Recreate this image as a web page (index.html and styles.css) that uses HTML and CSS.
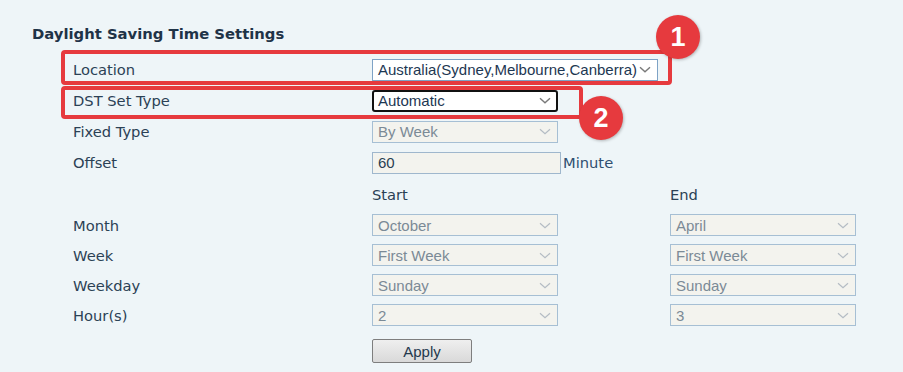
FILE: index.html
```html
<!DOCTYPE html>
<html>
<head>
<meta charset="utf-8">
<link rel="stylesheet" href="styles.css">
</head>
<body>
<div class="page">
  <h1 class="title">Daylight Saving Time Settings</h1>
  <div class="form">
    <div class="row r31">
      <div class="label">Location</div>
      <div class="sel enabled wide"><span>Australia(Sydney,Melbourne,Canberra)</span><svg class="chev" viewBox="0 0 12 7" width="12" height="7"><path d="M1 1.2 L6 5.8 L11 1.2" fill="none" stroke="currentColor" stroke-width="1.4"/></svg></div>
    </div>
    <div class="row r31">
      <div class="label">DST Set Type</div>
      <div class="sel enabled focus"><span>Automatic</span><svg class="chev" viewBox="0 0 12 7" width="12" height="7"><path d="M1 1.2 L6 5.8 L11 1.2" fill="none" stroke="currentColor" stroke-width="1.4"/></svg></div>
    </div>
    <div class="row r31">
      <div class="label">Fixed Type</div>
      <div class="sel dis"><span>By Week</span><svg class="chev" viewBox="0 0 12 7" width="12" height="7"><path d="M1 1.2 L6 5.8 L11 1.2" fill="none" stroke="currentColor" stroke-width="1.2"/></svg></div>
    </div>
    <div class="row r31">
      <div class="label">Offset</div>
      <div class="offset"><div class="input">60</div><span class="unit">Minute</span></div>
    </div>
    <div class="row r32">
      <div class="label"></div>
      <div class="label">Start</div>
      <div class="label">End</div>
    </div>
    <div class="row r30">
      <div class="label">Month</div>
      <div class="sel dis"><span>October</span><svg class="chev" viewBox="0 0 12 7" width="12" height="7"><path d="M1 1.2 L6 5.8 L11 1.2" fill="none" stroke="currentColor" stroke-width="1.2"/></svg></div>
      <div class="sel dis"><span>April</span><svg class="chev" viewBox="0 0 12 7" width="12" height="7"><path d="M1 1.2 L6 5.8 L11 1.2" fill="none" stroke="currentColor" stroke-width="1.2"/></svg></div>
    </div>
    <div class="row r30">
      <div class="label">Week</div>
      <div class="sel dis"><span>First Week</span><svg class="chev" viewBox="0 0 12 7" width="12" height="7"><path d="M1 1.2 L6 5.8 L11 1.2" fill="none" stroke="currentColor" stroke-width="1.2"/></svg></div>
      <div class="sel dis"><span>First Week</span><svg class="chev" viewBox="0 0 12 7" width="12" height="7"><path d="M1 1.2 L6 5.8 L11 1.2" fill="none" stroke="currentColor" stroke-width="1.2"/></svg></div>
    </div>
    <div class="row r30">
      <div class="label">Weekday</div>
      <div class="sel dis"><span>Sunday</span><svg class="chev" viewBox="0 0 12 7" width="12" height="7"><path d="M1 1.2 L6 5.8 L11 1.2" fill="none" stroke="currentColor" stroke-width="1.2"/></svg></div>
      <div class="sel dis"><span>Sunday</span><svg class="chev" viewBox="0 0 12 7" width="12" height="7"><path d="M1 1.2 L6 5.8 L11 1.2" fill="none" stroke="currentColor" stroke-width="1.2"/></svg></div>
    </div>
    <div class="row r30">
      <div class="label">Hour(s)</div>
      <div class="sel dis"><span>2</span><svg class="chev" viewBox="0 0 12 7" width="12" height="7"><path d="M1 1.2 L6 5.8 L11 1.2" fill="none" stroke="currentColor" stroke-width="1.2"/></svg></div>
      <div class="sel dis"><span>3</span><svg class="chev" viewBox="0 0 12 7" width="12" height="7"><path d="M1 1.2 L6 5.8 L11 1.2" fill="none" stroke="currentColor" stroke-width="1.2"/></svg></div>
    </div>
    <div class="row actions">
      <div class="label"></div>
      <button class="apply">Apply</button>
    </div>
  </div>
</div>
<div class="mark box1"></div>
<div class="mark box2"></div>
<div class="badge b1">1</div>
<div class="badge b2">2</div>
</body>
</html>
```
FILE: styles.css
```css
html, body {
  margin: 0;
  padding: 0;
  background: #eef5f8;
}
body {
  width: 903px;
  height: 372px;
  overflow: hidden;
  position: relative;
  font-family: "DejaVu Sans", Verdana, sans-serif;
}
.page {
  padding: 24px 0 0 32px;
}
.title {
  margin: 0;
  font-size: 14.8px;
  line-height: 20px;
  font-weight: bold;
  color: #1f3347;
  height: 30px;
}
.form {
  padding-left: 41px;
}
.row {
  display: grid;
  grid-template-columns: 299px 298px auto;
  align-items: center;
}
.r31 { height: 31px; }
.r32 { height: 32px; }
.r30 { height: 30px; }
.label {
  font-size: 14.7px;
  color: #2b4155;
}
.sel {
  box-sizing: border-box;
  width: 186px;
  height: 22px;
  display: flex;
  align-items: center;
  justify-content: space-between;
  padding: 0 6px 0 5px;
  font-family: "Liberation Sans", Arial, sans-serif;
  font-size: 15px;
  border: 1px solid #a6bfd4;
}
.sel.wide { width: 286px; }
.sel.enabled {
  background: #ffffff;
  border-color: #7ea3c6;
  color: #1d3752;
}
.sel.enabled .chev { color: #7a7a7a; }
.sel.focus {
  border: 2px solid #111111;
  border-radius: 3px;
  padding-left: 4px;
  padding-right: 5px;
}
.sel.dis {
  background: #f3f3ee;
  color: #7b8a96;
}
.sel.dis .chev { color: #b4bcc4; }
.offset {
  display: flex;
  align-items: center;
  gap: 2px;
}
.input {
  box-sizing: border-box;
  width: 189px;
  height: 22px;
  line-height: 20px;
  border: 1px solid #9fb7cd;
  background: #f3f3ee;
  padding-left: 5px;
  font-family: "Liberation Sans", Arial, sans-serif;
  font-size: 15px;
  color: #2a3e52;
}
.unit {
  font-size: 14.7px;
  color: #2e4f70;
}
.actions {
  margin-top: 9px;
}
.apply {
  box-sizing: border-box;
  width: 100px;
  height: 24px;
  padding: 0;
  border: 1px solid #7e7e7e;
  border-radius: 2px;
  background: linear-gradient(#efefef, #d9d9d9);
  font-family: "Liberation Sans", Arial, sans-serif;
  font-size: 15px;
  color: #24384d;
}
.mark {
  position: absolute;
  box-sizing: border-box;
  border: 4px solid #e63a3e;
  border-radius: 4px;
}
.box1 { left: 61px; top: 50px; width: 611px; height: 35px; }
.box2 { left: 61px; top: 86px; width: 522px; height: 33px; }
.badge {
  position: absolute;
  width: 44px;
  height: 44px;
  border-radius: 50%;
  background: #e63a3e;
  color: #ffffff;
  font-family: "Liberation Sans", Arial, sans-serif;
  font-weight: bold;
  font-size: 27px;
  line-height: 44px;
  text-align: center;
  box-shadow: 1px 1px 3px rgba(0,0,0,0.25);
}
.b1 { left: 656px; top: 15px; }
.b2 { left: 579px; top: 96px; }
```
